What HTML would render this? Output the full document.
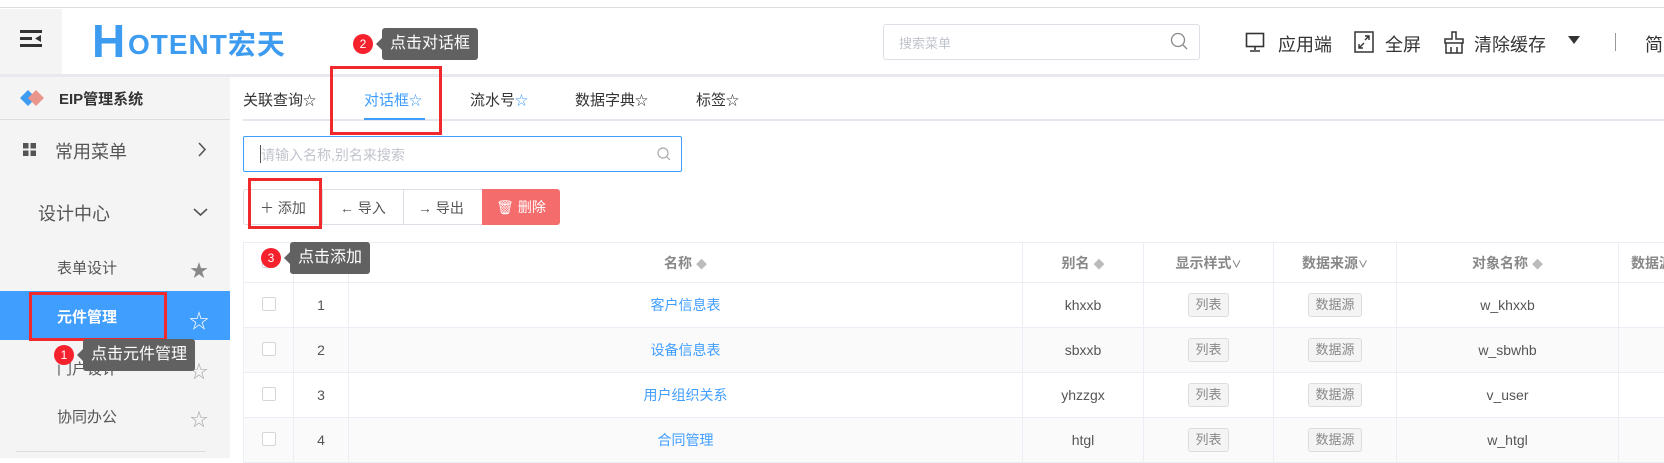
<!DOCTYPE html>
<html><head><meta charset="utf-8"><style>
*{box-sizing:border-box;margin:0;padding:0}
body{width:1664px;height:458px;overflow:hidden;background:#fff;font-family:"Liberation Sans","Noto Sans CJK SC",sans-serif;color:#333;position:relative}
.a{position:absolute}
.tip{position:absolute;background:#616161;color:#fff;font-size:16px;line-height:32px;padding:0 8px;border-radius:3px;white-space:nowrap}
.tip:before{content:"";position:absolute;left:-6px;top:10px;border:6px solid transparent;border-left:0;border-right-color:#616161}
.badge{position:absolute;width:20px;height:20px;border-radius:50%;background:#f5222d;color:#fff;font-size:12px;text-align:center;line-height:20px}
.rb{position:absolute;border:3px solid #f0292d}
.side{font-size:16px;color:#555}
.tbl td{border-right:1px solid #ebeef5;border-bottom:1px solid #ebeef5;text-align:center;font-size:14px;color:#555}
.tag{display:inline-block;border:1px solid #ddd;background:#f4f4f5;color:#888;border-radius:3px;font-size:13px;line-height:22px;padding:0 6px}
.tbl td.lnk{color:#409eff}
.cb{display:inline-block;width:14px;height:14px;border:1px solid #d6d6d6;border-radius:2px;background:#fff}
.star{color:#aaa;font-size:18px}
</style></head><body>
<div class="a" style="left:0;top:0;width:1664px;height:8px;background:#fff;border-bottom:1px solid #ddd"></div>
<div class="a" style="left:0;top:9px;width:62px;height:66px;background:#f4f4f4"></div>
<svg class="a" style="left:20px;top:30px" width="22" height="18" viewBox="0 0 22 18"><rect x="0" y="0" width="22" height="3" fill="#333"/><rect x="0" y="7" width="12" height="3" fill="#333"/><rect x="0" y="14" width="22" height="3" fill="#333"/><path d="M21 5 L15 8.5 L21 12Z" fill="#333"/></svg>
<div class="a" style="left:92px;top:18px;font-size:46px;font-weight:bold;color:#3d9bf0;line-height:46px">H</div>
<div class="a" style="left:128px;top:28px;font-size:28px;font-weight:bold;color:#3d9bf0;letter-spacing:1px;line-height:34px">OTENT宏天</div>
<div class="a" style="left:0;top:74px;width:1664px;height:3px;background:#e8e8ee"></div>
<div class="badge" style="left:353px;top:34px">2</div>
<div class="tip" style="left:382px;top:28px">点击对话框</div>
<div class="a" style="left:883px;top:24px;width:317px;height:36px;border:1px solid #dcdfe6;border-radius:3px"></div>
<div class="a" style="left:899px;top:33px;font-size:13px;color:#c0c4cc">搜索菜单</div>
<svg class="a" style="left:1170px;top:32px" width="18" height="18"><circle cx="8" cy="8" r="6.5" fill="none" stroke="#888" stroke-width="1.3"/><path d="M13 13l4 4" stroke="#888" stroke-width="1.3"/></svg>
<svg class="a" style="left:1245px;top:32px" width="20" height="20"><rect x="1.5" y="1.5" width="17" height="13" fill="none" stroke="#333" stroke-width="1.6"/><path d="M10 15v3M5 19h10" stroke="#333" stroke-width="1.6"/></svg>
<div class="a" style="left:1278px;top:31px;font-size:18px">应用端</div>
<svg class="a" style="left:1354px;top:31px" width="20" height="22"><rect x="1" y="1" width="18" height="20" fill="none" stroke="#333" stroke-width="1.5"/><path d="M5 17l5-5M5 13v4h4M15 5l-4 4M15 9V5h-4" stroke="#333" stroke-width="1.4" fill="none"/></svg>
<div class="a" style="left:1385px;top:31px;font-size:18px">全屏</div>
<svg class="a" style="left:1443px;top:30px" width="22" height="24"><path d="M9 2h4v7h7v4H2V9h7z M3 13v10h16V13 M8 17v6M14 17v6" fill="none" stroke="#333" stroke-width="1.5"/></svg>
<div class="a" style="left:1474px;top:31px;font-size:18px">清除缓存</div>
<div class="a" style="left:1568px;top:36px;border:6px solid transparent;border-top:8px solid #333;border-bottom:0"></div>
<div class="a" style="left:1615px;top:33px;width:1px;height:18px;background:#999"></div>
<div class="a" style="left:1645px;top:31px;font-size:18px">简</div>

<div class="a" style="left:0;top:77px;width:230px;height:381px;background:#f4f4f4"></div>
<svg class="a" style="left:20px;top:90px" width="24" height="16"><path d="M8 0l8 8-8 8-8-8z" fill="#3d9bf0"/><path d="M16 0l8 8-8 8-8-8z" fill="#eb968c"/></svg>
<div class="a" style="left:59px;top:88px;font-size:15px;font-weight:bold;color:#333">EIP管理系统</div>
<div class="a" style="left:0;top:119px;width:230px;height:1px;background:#ddd"></div>
<svg class="a" style="left:23px;top:143px" width="13" height="13"><rect width="5.5" height="5.5" fill="#555"/><rect x="7.5" width="5.5" height="5.5" fill="#555"/><rect y="7.5" width="5.5" height="5.5" fill="#555"/><rect x="7.5" y="7.5" width="5.5" height="5.5" fill="#555"/></svg>
<div class="a side" style="left:55px;top:138px;font-size:18px">常用菜单</div>
<svg class="a" style="left:197px;top:142px" width="10" height="15"><path d="M2 1l6 6.5L2 14" stroke="#555" stroke-width="1.6" fill="none"/></svg>
<div class="a side" style="left:38px;top:200px;font-size:18px">设计中心</div>
<svg class="a" style="left:193px;top:207px" width="15" height="10"><path d="M1 2l6.5 6L14 2" stroke="#555" stroke-width="1.6" fill="none"/></svg>
<div class="a side" style="left:57px;top:257px;font-size:15px">表单设计</div>
<div class="a" style="left:190px;top:257px;color:#888;font-size:18px">★</div>
<div class="a" style="left:0;top:291px;width:230px;height:49px;background:#409eff"></div>
<div class="a" style="left:57px;top:306px;font-size:15px;color:#fff;font-weight:bold">元件管理</div>
<div class="a" style="left:189px;top:305px;color:#fff;font-size:20px">☆</div>
<div class="a side" style="left:57px;top:358px;font-size:15px">门户设计</div>
<div class="a star" style="left:190px;top:358px">☆</div>
<div class="a side" style="left:57px;top:406px;font-size:15px">协同办公</div>
<div class="a star" style="left:190px;top:406px">☆</div>
<div class="a" style="left:16px;top:451px;width:190px;height:1px;background:#ddd"></div>
<div class="rb" style="left:29px;top:292px;width:138px;height:49px"></div>
<div class="badge" style="left:54px;top:345px">1</div>
<div class="tip" style="left:83px;top:339px">点击元件管理</div>

<div class="a" style="left:243px;top:119px;width:1421px;height:2px;background:#e4e7ed"></div>
<div class="a" style="left:243px;top:89px;font-size:15px;color:#333">关联查询<span style="font-size:13px">☆</span></div>
<div class="a" style="left:364px;top:89px;font-size:15px;color:#409eff">对话框<span style="font-size:13px">☆</span></div>
<div class="a" style="left:364px;top:118px;width:61px;height:2px;background:#409eff"></div>
<div class="a" style="left:470px;top:89px;font-size:15px;color:#333">流水号<span style="font-size:13px;color:#409eff">☆</span></div>
<div class="a" style="left:575px;top:89px;font-size:15px;color:#333">数据字典<span style="font-size:13px">☆</span></div>
<div class="a" style="left:696px;top:89px;font-size:15px;color:#333">标签<span style="font-size:13px">☆</span></div>
<div class="rb" style="left:330px;top:66px;width:112px;height:69px"></div>

<div class="a" style="left:243px;top:136px;width:439px;height:36px;border:1px solid #409eff;border-radius:2px"></div>
<div class="a" style="left:260px;top:145px;width:1px;height:18px;background:#555"></div>
<div class="a" style="left:261px;top:145px;font-size:14px;color:#c0c4cc">请输入名称,别名来搜索</div>
<svg class="a" style="left:657px;top:147px" width="14" height="14"><circle cx="6" cy="6" r="5" fill="none" stroke="#aaa" stroke-width="1.2"/><path d="M10 10l3 3" stroke="#aaa" stroke-width="1.2"/></svg>

<div class="a" style="left:243px;top:189px;width:241px;height:36px;border:1px solid #dcdfe6;border-radius:3px 0 0 3px"></div>
<div class="a" style="left:322px;top:189px;width:1px;height:36px;background:#dcdfe6"></div>
<div class="a" style="left:403px;top:189px;width:1px;height:36px;background:#dcdfe6"></div>
<div class="a" style="left:260px;top:198px;font-size:14px;color:#555">＋ 添加</div>
<div class="a" style="left:340px;top:198px;font-size:14px;color:#555">← 导入</div>
<div class="a" style="left:418px;top:198px;font-size:14px;color:#555">→ 导出</div>
<div class="a" style="left:482px;top:189px;width:78px;height:36px;background:#f56c6c;border-radius:0 3px 3px 0;color:#fff;font-size:14px;line-height:36px;text-align:center">🗑 删除</div>
<div class="rb" style="left:248px;top:178px;width:74px;height:51px"></div>

<table class="tbl a" style="left:243px;top:242px;border-collapse:collapse;border-top:1px solid #ebeef5;border-left:1px solid #ebeef5;width:1450px">
<tr style="height:40px;font-weight:bold"><td style="width:50px"><span class="cb"></span></td><td style="width:55px;color:#888">序号</td><td style="width:674px;color:#888">名称 <span style="color:#bbb;font-size:11px">◆</span></td><td style="width:121px;color:#888">别名 <span style="color:#bbb;font-size:11px">◆</span></td><td style="width:130px;color:#888">显示样式<span style="font-size:10px">∨</span></td><td style="width:123px;color:#888">数据来源<span style="font-size:10px">∨</span></td><td style="width:222px;color:#888">对象名称 <span style="color:#bbb;font-size:11px">◆</span></td><td style="text-align:left;color:#888;padding-left:12px">数据源</td></tr>
<tr style="height:45px"><td><span class="cb"></span></td><td>1</td><td class="lnk">客户信息表</td><td>khxxb</td><td><span class="tag">列表</span></td><td><span class="tag">数据源</span></td><td>w_khxxb</td><td></td></tr>
<tr style="height:45px;background:#fafafa"><td><span class="cb"></span></td><td>2</td><td class="lnk">设备信息表</td><td>sbxxb</td><td><span class="tag">列表</span></td><td><span class="tag">数据源</span></td><td>w_sbwhb</td><td></td></tr>
<tr style="height:45px"><td><span class="cb"></span></td><td>3</td><td class="lnk">用户组织关系</td><td>yhzzgx</td><td><span class="tag">列表</span></td><td><span class="tag">数据源</span></td><td>v_user</td><td></td></tr>
<tr style="height:45px;background:#fafafa"><td><span class="cb"></span></td><td>4</td><td class="lnk">合同管理</td><td>htgl</td><td><span class="tag">列表</span></td><td><span class="tag">数据源</span></td><td>w_htgl</td><td></td></tr>
</table>
<div class="badge" style="left:261px;top:248px">3</div>
<div class="tip" style="left:290px;top:242px">点击添加</div>
</body></html>
